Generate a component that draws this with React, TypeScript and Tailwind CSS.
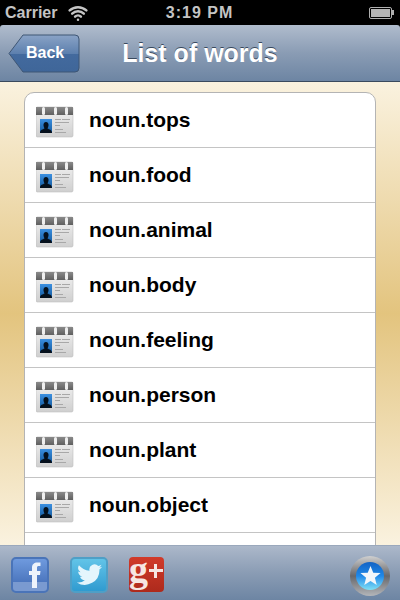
import { Wifi } from 'lucide-react';

const words = ['noun.tops', 'noun.food', 'noun.animal', 'noun.body', 'noun.feeling', 'noun.person', 'noun.plant', 'noun.object', ''];

function ContactIcon() {
  return (
    <svg width="38" height="32" viewBox="0 0 38 32" className="shrink-0 mt-[4px]">
      <defs>
        <linearGradient id="page" x1="0" y1="0" x2="0" y2="1">
          <stop offset="0" stopColor="#f2f2f2" />
          <stop offset="1" stopColor="#cfcfcf" />
        </linearGradient>
        <linearGradient id="bar" x1="0" y1="0" x2="0" y2="1">
          <stop offset="0" stopColor="#8a8a8a" />
          <stop offset="1" stopColor="#5f5f5f" />
        </linearGradient>
        <linearGradient id="photo" x1="0" y1="0" x2="0" y2="1">
          <stop offset="0" stopColor="#3a8fe0" />
          <stop offset="1" stopColor="#145a9e" />
        </linearGradient>
      </defs>
      <rect x="0" y="1" width="37" height="30" rx="1.5" fill="url(#page)" stroke="#c0c0c0" strokeWidth="0.6" />
      <rect x="0" y="1" width="37" height="8" fill="url(#bar)" />
      <rect x="6" y="1" width="3" height="8" rx="1.5" fill="#efefef" />
      <rect x="18" y="1" width="3" height="8" rx="1.5" fill="#efefef" />
      <rect x="29" y="1" width="3" height="8" rx="1.5" fill="#efefef" />
      <rect x="4" y="13" width="12" height="14" fill="url(#photo)" />
      <path d="M4 27 C4 23.500 7 23.500 8.500 22.500 C7.500 20.500 7 18.500 8 17 C9 15.500 11 15.500 12 17 C13 18.500 12.500 20.500 11.500 22.500 C13 23.500 16 23.500 16 27 Z" fill="#05101c" />
      <g fill="#a8a8a8">
        <rect x="19" y="13" width="6" height="1" />
        <rect x="26" y="13" width="8" height="1" />
        <rect x="19" y="16" width="14" height="1" />
        <rect x="19" y="19" width="5" height="1" />
        <rect x="19" y="23" width="8" height="1" />
        <rect x="19" y="26" width="11" height="1" />
      </g>
    </svg>
  );
}

function Facebook() {
  return (
    <div className="relative w-[38px] h-[36px] rounded-[5px] border-2 border-[#4a74b8] bg-gradient-to-b from-[#6f9ade] to-[#3f69b2] overflow-hidden">
      <div className="absolute left-0 right-0 bottom-0 h-[9px] bg-[#7a9ad0]" />
      <svg width="34" height="32" viewBox="0 0 34 32" className="absolute left-0 top-0">
        <path d="M19 29 H24 V16 H27 L27.500 12 H24 V8.500 C24 7.500 24.700 7 25.700 7 H27.500 V3.500 H24.500 C21 3.500 19 5.500 19 8.500 V12 H16 V16 H19 Z" fill="#eef3fb" />
      </svg>
    </div>
  );
}

function Twitter() {
  return (
    <div className="w-[38px] h-[36px] rounded-[5px] border-2 border-[#4f9fc6] bg-gradient-to-b from-[#62c4e8] to-[#2f9bd0] flex items-center justify-center">
      <svg width="27" height="22" viewBox="0 0 24 20">
        <path d="M23.500 2.500c-.8.4-1.700.6-2.600.7.900-.6 1.600-1.400 2-2.500-.9.500-1.900.900-2.900 1.100A4.700 4.700 0 0 0 12 6.100C8.100 5.900 4.700 4 2.400 1.200a4.700 4.700 0 0 0 1.400 6.200c-.7 0-1.400-.2-2.100-.6 0 2.300 1.600 4.200 3.800 4.700-.7.200-1.400.2-2.100.1.600 1.900 2.300 3.200 4.400 3.200A9.400 9.400 0 0 1 .500 16.800 13.300 13.300 0 0 0 21 5c.9-.7 1.800-1.500 2.500-2.500z" fill="#e4f5fc" />
      </svg>
    </div>
  );
}

function GooglePlus() {
  return (
    <div className="relative w-[35px] h-[35px] -mt-[1px] rounded-[4px] bg-gradient-to-b from-[#d13a2a] to-[#ad2a1c]">
      <span className="absolute left-0 top-0 text-[38px] leading-[25px] font-bold text-[#f6e6e2] font-['Liberation_Serif',serif]">g</span>
      <span className="absolute left-[20px] top-[12px] w-[14px] h-[3px] bg-[#f6e6e2]" />
      <span className="absolute left-[25px] top-[7px] w-[3px] h-[14px] bg-[#f6e6e2]" />
    </div>
  );
}

function StarButton() {
  return (
    <div className="w-[40px] h-[40px] rounded-full bg-gradient-to-b from-[#d0d0d0] via-[#67686c] to-[#b4b6ba] flex items-center justify-center">
      <div className="w-[28px] h-[28px] rounded-full bg-gradient-to-b from-[#1463c4] via-[#1f88e8] to-[#7fe0f4] flex items-center justify-center">
        <svg width="23" height="23" viewBox="0 0 24 24">
          <path d="M12 2 L14.900 9 L22.500 9.500 L16.600 14.300 L18.500 21.800 L12 17.700 L5.500 21.800 L7.400 14.300 L1.500 9.500 L9.100 9 Z" fill="#f2f6fa" />
        </svg>
      </div>
    </div>
  );
}

export default function App() {
  return (
    <div className="w-[400px] h-[600px] flex flex-col bg-black overflow-hidden font-['Liberation_Sans',Arial,sans-serif]">
      <div className="h-[25px] shrink-0 pl-[5px] pr-[6px] grid grid-cols-[1fr_auto_1fr] items-center text-[#c4c4c4] text-[16px] font-bold">
        <div className="flex items-center gap-[11px]">
          <span>Carrier</span>
          <Wifi size={20} strokeWidth={3} />
        </div>
        <span className="tracking-[1px]">3:19 PM</span>
        <div className="flex items-center justify-end">
          <div className="w-[23px] h-[12px] border border-[#b0b0b0] rounded-[2px] p-[1px]">
            <div className="w-full h-full bg-[#b4b4b4]" />
          </div>
          <div className="w-[2px] h-[5px] bg-[#b0b0b0]" />
        </div>
      </div>

      <div className="h-[57px] shrink-0 relative flex items-center justify-center rounded-t-[3px] border-b border-[#3a4a5e] bg-gradient-to-b from-[#b0bccd] via-[#8a9cb4] to-[#6d85a3]">
        <div className="absolute left-[8px] top-[9px] w-[72px] h-[39px]">
          <svg width="72" height="39" viewBox="0 0 72 39" className="absolute inset-0">
            <defs>
              <linearGradient id="back" x1="0" y1="0" x2="0" y2="1">
                <stop offset="0" stopColor="#8aa3c6" />
                <stop offset="0.5" stopColor="#5d80ae" />
                <stop offset="0.51" stopColor="#436a9e" />
                <stop offset="1" stopColor="#3f6699" />
              </linearGradient>
            </defs>
            <path d="M1 19.500 L15 1 H67 Q71 1 71 5 V34 Q71 38 67 38 H15 Z" fill="url(#back)" stroke="#3f5674" strokeWidth="1" />
          </svg>
          <span className="absolute left-[18px] top-[9px] text-[16px] leading-[20px] font-bold text-white">Back</span>
        </div>
        <h1 className="mt-[2px] text-[25px] font-bold text-white [text-shadow:0_-1px_0_#3a4a5e]">List of words</h1>
      </div>

      <div className="flex-1 min-h-0 overflow-hidden px-[24px] pt-[10px] bg-gradient-to-b from-[#faf2df] via-[#e3c47e] to-[#faf2df]">
        <div className="bg-white rounded-t-[10px] border border-[#b4b4b4]">
          {words.map((word, i) => (
            <div key={i} className="h-[55px] flex items-center gap-[15px] pl-[11px] border-b border-[#c4c4c4]">
              {word && <ContactIcon />}
              <span className="text-[21px] font-bold text-black">{word}</span>
            </div>
          ))}
        </div>
      </div>

      <div className="h-[55px] shrink-0 flex items-center pl-[11px] pr-[10px] pt-[3px] bg-gradient-to-b from-[#acb8ca] via-[#8a9cb4] to-[#6d85a3] border-t border-[#9aa8bc]">
        <div className="flex items-center gap-[21px]">
          <Facebook />
          <Twitter />
          <GooglePlus />
        </div>
        <div className="ml-auto mt-[2px]">
          <StarButton />
        </div>
      </div>
    </div>
  );
}
